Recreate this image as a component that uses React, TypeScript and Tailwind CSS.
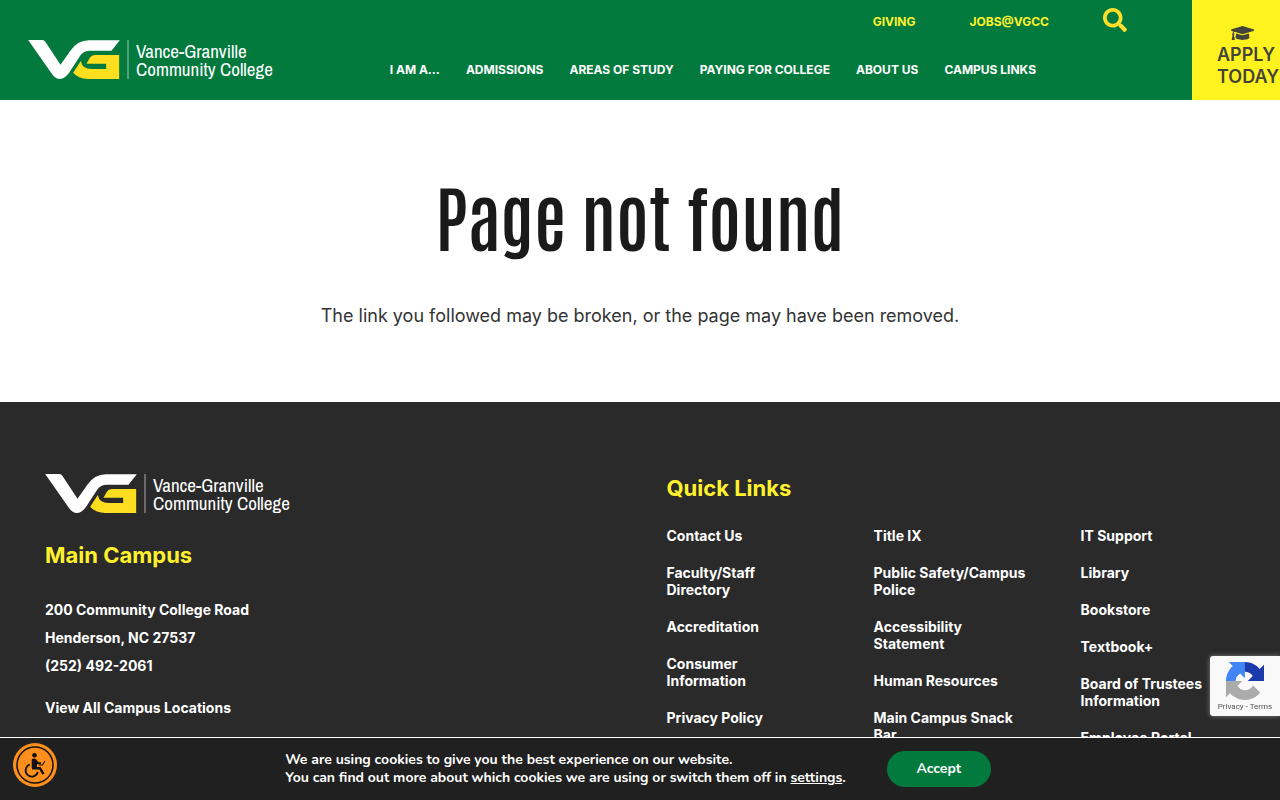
import React from "react";
import { FaSearch, FaGraduationCap } from "react-icons/fa";

const navItems = ["I AM A…", "ADMISSIONS", "AREAS OF STUDY", "PAYING FOR COLLEGE", "ABOUT US", "CAMPUS LINKS"];

const linkColumns = [
  ["Contact Us", "Faculty/Staff Directory", "Accreditation", "Consumer Information", "Privacy Policy"],
  ["Title IX", "Public Safety/Campus Police", "Accessibility Statement", "Human Resources", "Main Campus Snack Bar"],
  ["IT Support", "Library", "Bookstore", "Textbook+", "Board of Trustees Information", "Employee Portal"],
];

function Logo() {
  return (
    <a href="#" className="flex w-fit items-center font-normal text-white" aria-label="Vance-Granville Community College">
      <svg viewBox="0 0 275 117" className="h-[39px] w-[92px]" aria-hidden="true">
        <path
          fill="#fff"
          d="M0 0H43Q48 0 52 6L97 74L126 33Q148 1 182 1H275L250 32H186Q166 32 156 47L124 97Q110 117 95 117Q82 117 72 103Z"
        />
        <path
          fill="#fddf1f"
          d="M200 45H273V117H180Q149 115 135 98L158 63Q162 87 190 87H234V71H175L185 53Q190 45 200 45Z"
        />
      </svg>
      <span className="ml-[7px] h-[39px] w-[2px] bg-white/30" />
      <span className="ml-[7px] font-['Archivo_Narrow','Liberation_Sans',sans-serif] text-[19px] leading-[18px]">
        Vance-Granville
        <br />
        Community College
      </span>
    </a>
  );
}

function RecaptchaMark() {
  return (
    <svg viewBox="0 0 64 64" className="size-[38px]" aria-hidden="true">
      <path
        fill="#1c3aa9"
        d="M64 31.955l-.033-1.37V4.687l-7.16 7.16C50.948 4.674 42.033.093 32.05.093c-10.4 0-19.622 4.96-25.458 12.64l11.736 11.86a15.55 15.55 0 0 1 4.754-5.334c2.05-1.6 4.952-2.906 8.968-2.906.485 0 .86.057 1.135.163 4.976.393 9.288 3.14 11.828 7.124l-8.307 8.307L64 31.953"
      />
      <path
        fill="#4285f4"
        d="M31.862.094l-1.37.033H4.594l7.16 7.16C4.58 13.147 0 22.06 0 32.046c0 10.4 4.96 19.622 12.64 25.458L24.5 45.768a15.55 15.55 0 0 1-5.334-4.754c-1.6-2.05-2.906-4.952-2.906-8.968 0-.485.057-.86.163-1.135.393-4.976 3.14-9.288 7.124-11.828l8.307 8.307L31.86.095"
      />
      <path
        fill="#ababab"
        d="M.001 32.045l.033 1.37v25.898l7.16-7.16c5.86 7.173 14.774 11.754 24.76 11.754 10.4 0 19.622-4.96 25.458-12.64l-11.736-11.86a15.55 15.55 0 0 1-4.754 5.334c-2.05 1.6-4.952 2.906-8.968 2.906-.485 0-.86-.057-1.135-.163-4.976-.393-9.288-3.14-11.828-7.124l8.307-8.307c-10.522.04-22.4.066-27.295-.005"
      />
    </svg>
  );
}

function AccessibilityMark() {
  return (
    <svg viewBox="0 0 44 44" className="size-11" aria-hidden="true">
      <circle cx="22" cy="22" r="22" fill="#ff8f1c" />
      <circle cx="22" cy="22" r="18" fill="none" stroke="#111" strokeWidth="1.5" />
      <circle cx="21.5" cy="12.2" r="2.3" fill="#111" />
      <path d="M18.7 16.5Q20.5 14.5 23 16.3L25.5 19.3H28V21.2H24V25H18.7Z" fill="#111" />
      <path d="M26 22H29.5L31.7 18.2" fill="none" stroke="#111" strokeWidth="1.1" />
      <path d="M19 25.3H27L30.5 31.2" fill="none" stroke="#111" strokeWidth="2.4" />
      <path d="M16.8 21.5A6.2 6.2 0 1 0 24.8 29" fill="none" stroke="#111" strokeWidth="1.8" />
    </svg>
  );
}

export default function App() {
  return (
    <div className="flex min-h-screen flex-col bg-white font-[Inter,sans-serif] text-white">
      <header className="flex h-[100px] bg-[#037a3d]">
        <div className="flex items-end pb-[21px] pl-7">
          <Logo />
        </div>
        <div className="ml-auto flex flex-col">
          <div className="flex h-[42px] items-start justify-end gap-[54px] pt-2 pr-[65px] text-xs leading-[28px] font-bold text-[#fff22d]">
            <a href="#">GIVING</a>
            <a href="#">JOBS@VGCC</a>
            <button type="button" aria-label="Search" className="text-[#fddf2b]">
              <FaSearch className="size-6" />
            </button>
          </div>
          <nav className="flex h-14 items-center gap-[26px] pr-[156px] text-xs font-bold whitespace-nowrap">
            {navItems.map((item) => (
              <a key={item} href="#">{item}</a>
            ))}
          </nav>
        </div>
        <a
          href="#"
          className="flex w-[88px] shrink-0 flex-col justify-end bg-[#fff31f] pb-3 pl-[25px] text-lg leading-[22px] font-semibold text-[#44433b]"
        >
          <FaGraduationCap className="ml-[14px] h-[22px] w-[23px]" />
          <span>APPLY</span>
          <span>TODAY</span>
        </a>
      </header>

      <main className="flex flex-col items-center px-6 pt-[65px] pb-[73px] text-center">
        <h1 className="font-['Antonio','Oswald',sans-serif] text-7xl leading-[100px] font-semibold text-[#1a1a1a]">
          Page not found
        </h1>
        <p className="mt-[38px] text-lg leading-[26px] text-[#333]">
          The link you followed may be broken, or the page may have been removed.
        </p>
      </main>

      <footer className="grid grow grid-cols-2 bg-[#2a2a2a] pt-[72px] pb-14 pl-[45px] text-sm font-bold">
        <section>
          <Logo />
          <h2 className="mt-7 text-[22px] leading-7 text-[#fff22d]">Main Campus</h2>
          <address className="mt-[27px] leading-7 not-italic">
            200 Community College Road
            <br />
            Henderson, NC 27537
            <br />
            (252) 492-2061
          </address>
          <a href="#" className="mt-[14px] block leading-7">View All Campus Locations</a>
        </section>
        <section className="pl-1">
          <h2 className="text-[22px] leading-7 text-[#fff22d]">Quick Links</h2>
          <div className="mt-[25px] grid grid-cols-[27fr_27fr_26fr]">
            {linkColumns.map((links) => (
              <ul key={links[0]} className="flex flex-col gap-5 pr-[53px] leading-[17px] first:pr-16">
                {links.map((link) => (
                  <li key={link}><a href="#">{link}</a></li>
                ))}
              </ul>
            ))}
          </div>
        </section>
      </footer>

      <aside className="fixed right-0 bottom-[84px] flex h-[60px] w-[70px] flex-col items-center rounded-l-[3px] bg-[#f9f9f9] pt-[6px] shadow-[0_0_5px_gray]">
        <RecaptchaMark />
        <span className="mt-[2px] font-[Roboto,sans-serif] text-[8px] leading-[10px] whitespace-nowrap text-[#555]">
          <a href="#">Privacy</a> - <a href="#">Terms</a>
        </span>
      </aside>

      <div className="fixed inset-x-0 bottom-0 flex h-[63px] items-center justify-center gap-[41px] border-t border-white bg-[#202020] pr-1 font-[Nunito,'Open_Sans',sans-serif] text-sm leading-[18px] font-bold">
        <button type="button" aria-label="Accessibility menu" className="absolute bottom-[13px] left-[13px]">
          <AccessibilityMark />
        </button>
        <p>
          We are using cookies to give you the best experience on our website.
          <br />
          You can find out more about which cookies we are using or switch them off in{" "}
          <a href="#" className="underline">settings</a>.
        </p>
        <button type="button" className="h-9 w-[104px] rounded-full bg-[#037a3d]">Accept</button>
      </div>
    </div>
  );
}
